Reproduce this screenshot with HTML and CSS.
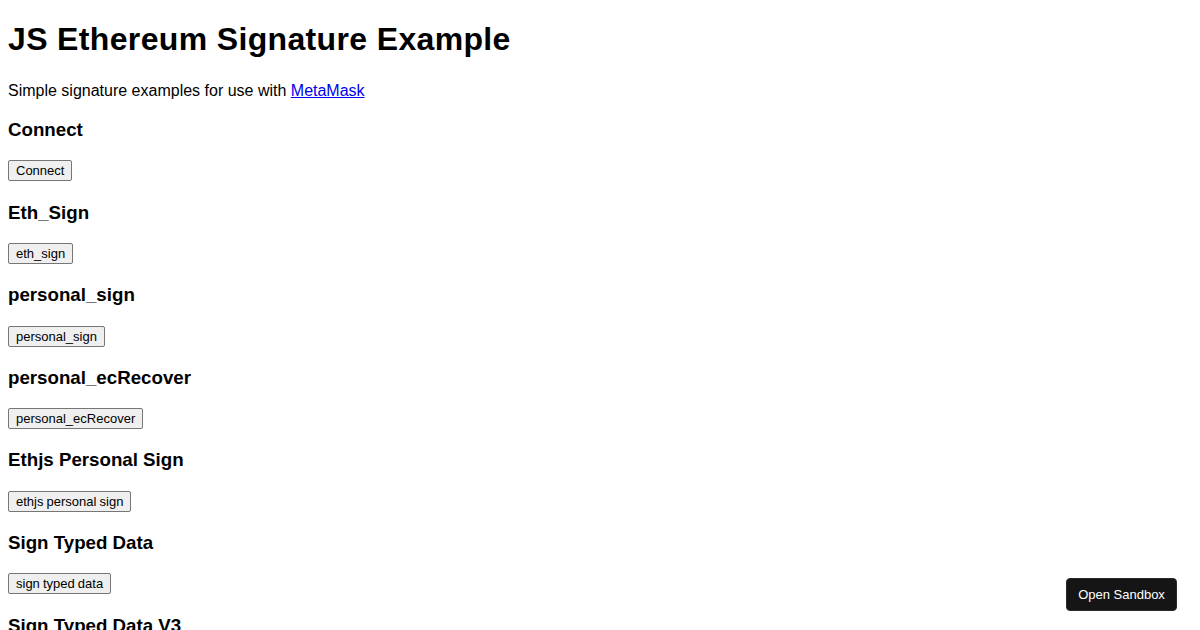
FILE: index.html
```html
<!DOCTYPE html>
<html>
<head>
<meta charset="utf-8">
<title>JS Ethereum Signature Example</title>
<link rel="stylesheet" href="styles.css">
</head>
<body>
<h1>JS Ethereum Signature Example</h1>
<p>Simple signature examples for use with <a href="#">MetaMask</a></p>
<h3>Connect</h3>
<div class="row"><button class="btn">Connect</button></div>
<h3>Eth_Sign</h3>
<div class="row"><button class="btn">eth_sign</button></div>
<h3>personal_sign</h3>
<div class="row"><button class="btn">personal_sign</button></div>
<h3>personal_ecRecover</h3>
<div class="row"><button class="btn">personal_ecRecover</button></div>
<h3>Ethjs Personal Sign</h3>
<div class="row"><button class="btn">ethjs personal sign</button></div>
<h3>Sign Typed Data</h3>
<div class="row"><button class="btn">sign typed data</button></div>
<h3>Sign Typed Data V3</h3>
<div class="row"><button class="btn">sign typed data v3</button></div>
<a class="sandbox" href="#">Open Sandbox</a>
</body>
</html>
```
FILE: styles.css
```css
html, body {
  background: #fff;
}
body {
  margin: 0 8px 8px;
  font-family: "Liberation Sans", Arial, sans-serif;
  font-size: 16px;
  line-height: 1.2;
  color: #000;
}
h1 {
  font-size: 32px;
  line-height: 37.6px;
  padding-bottom: 0.8px;
  letter-spacing: 0.35px;
  margin: 21.44px 0;
}
h3 {
  font-size: 18.72px;
  line-height: 1.2;
  margin: 18.72px 0;
}
p {
  margin: 16px 0;
}
a {
  color: #0000ee;
}
.row {
  display: flex;
  align-items: flex-start;
  min-height: 22.7px;
}
.btn {
  font-family: "Liberation Sans", Arial, sans-serif;
  font-size: 13px;
  line-height: 15px;
  word-spacing: -0.5px;
  color: #000;
  background: #efefef;
  border: 1px solid #767676;
  border-radius: 2px;
  padding: 2px 7px;
  margin: 0;
}
.sandbox {
  position: fixed;
  right: 23px;
  bottom: 19px;
  width: 111px;
  height: 33px;
  box-sizing: border-box;
  display: flex;
  align-items: center;
  justify-content: center;
  background: #151515;
  color: #fff;
  border-radius: 4px;
  border: 1px solid #2a2a2a;
  font-size: 13px;
  text-decoration: none;
}
```
